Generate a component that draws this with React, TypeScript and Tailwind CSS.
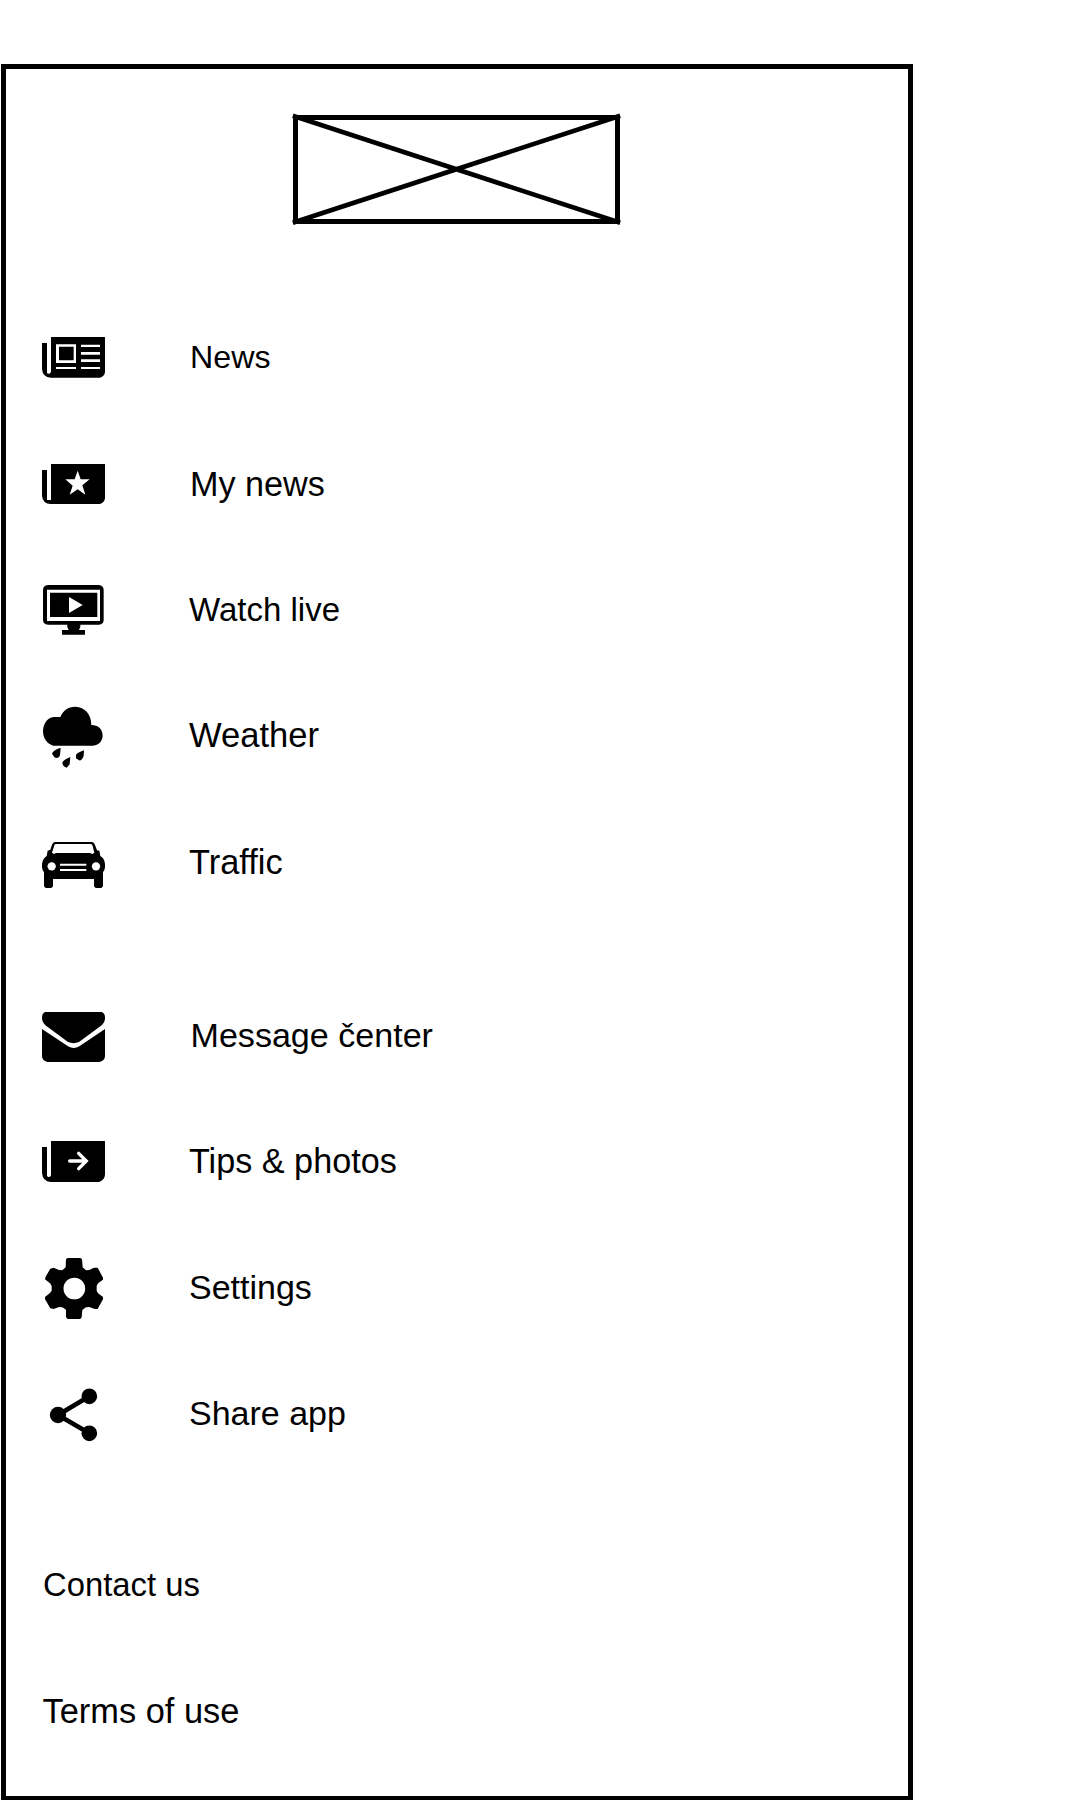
import React from "react";

type IconProps = { viewBox: string; children: React.ReactNode };

function Icon({ viewBox, children }: IconProps) {
  return (
    <svg viewBox={viewBox} className="h-[72px] w-[66px] shrink-0 fill-black" aria-hidden="true">
      {children}
    </svg>
  );
}

const NewsIcon = () => (
  <Icon viewBox="30 3 198 216">
    <path d="M36 69H51V158Q53 162 58 161Q63 160 63 154V51H225V156Q224 169 210 173H62Q38 172 36 148Z" />
    <path
      fill="#fff"
      fillRule="evenodd"
      d="M78 73H138V129H78ZM87 80V121H131V80ZM153 74H210V81H153ZM153 96H210V104H153ZM153 118H210V126H153ZM78 141H138V147H78ZM153 141H210V147H153Z"
    />
  </Icon>
);

const MyNewsIcon = () => (
  <Icon viewBox="30 381 198 216">
    <path d="M36 450H51V540H63V432H225V534Q224 548 210 552H62Q38 551 36 527Z" />
    <path fill="#fff" d="M143 452L152 478H179L157 496L166 524L143 508L119 524L128 497L106 478H134Z" />
  </Icon>
);

const WatchIcon = () => (
  <Icon viewBox="30 9 198 216">
    <path d="M54 45H206Q221 47 221 60V149Q221 163 207 164H151V171L147 180H165V194H96V180H116L112 171V164H54Q39 163 39 149V60Q39 47 54 45Z" />
    <path fill="#fff" fillRule="evenodd" d="M51 59H210V153H51ZM60 68V141H202V68Z" />
    <path fill="#fff" d="M117 81L158 105L117 129Z" />
  </Icon>
);

const WeatherIcon = () => (
  <Icon viewBox="30 387 198 216">
    <path d="M70 527C52 522 39 505 39 483C40 459 54 441 74 441H91C99 421 114 410 136 410C165 411 184 433 184 465C204 465 218 477 218 497C217 514 206 525 189 527Z" />
    <path d="M92 534L90 555C88 564 80 566 73 562L66 551C70 542 82 536 92 534Z" />
    <path d="M162 541L161 557C158 567 153 572 147 571L138 565V554C144 547 155 544 162 541Z" />
    <path d="M121 561L119 583L110 593C103 591 97 586 97 578C102 568 114 565 121 561Z" />
  </Icon>
);

const TrafficIcon = () => (
  <Icon viewBox="30 15 198 216">
    <path d="M75 66H187Q193 67 195 75L201 91L208 92L211 108Q224 116 225 132Q226 150 219 156V199L214 204H197L192 199V177H69V199L64 204H47L42 199V156Q35 150 36 132Q38 116 50 108L53 92L61 89L66 74Q69 67 75 66Z" />
    <path
      fill="#fff"
      d="M79 72H182Q187 72 188 78L193 98L187 102L180 99H78L72 102L66 98L73 76Q74 72 79 72ZM90 131H169V137H90ZM90 147H169V153H90Z"
    />
    <circle cx="65" cy="139" r="12.5" fill="#fff" />
    <circle cx="198" cy="139" r="12.5" fill="#fff" />
  </Icon>
);

const MessageIcon = () => (
  <Icon viewBox="30 27 198 216">
    <path d="M46 66H215Q225 69 225 83Q226 98 213 107L147 156Q131 163 114 156L48 107Q36 97 36 83Q36 69 46 66Z" />
    <path d="M36 117L114 169Q131 179 148 169L225 117V198Q225 212 209 216H52Q36 212 36 198Z" />
  </Icon>
);

const TipsIcon = () => (
  <Icon viewBox="30 405 198 216">
    <path d="M36 471H51V557Q53 562 58 561Q63 560 63 554V453H225V554Q224 571 206 576H62Q38 574 36 549Z" />
    <path d="M119 513H168M146 490L169 513L146 536" fill="none" stroke="#fff" strokeWidth="10" strokeLinecap="round" />
  </Icon>
);

const SettingsIcon = () => (
  <Icon viewBox="30 33 198 216">
    <path
      fillRule="evenodd"
      d="M112 54H152L156 58L158 82L168 91L178 90L192 83H203L219 113V119L204 130L200 138V152L204 160L219 171V178L203 207H194L178 201L168 202L157 210L155 232L151 237H113L108 232V209L97 202L87 201L71 207L61 205L45 178V171L59 160L65 152V138L60 130L45 118L47 110L61 86L71 83L87 90L97 91L107 82L108 58ZM133 113A32 32 0 1 0 133 178A32 32 0 1 0 133 113Z"
    />
  </Icon>
);

const ShareIcon = () => (
  <Icon viewBox="30 411 198 216">
    <path d="M178 469L84 525L178 580" fill="none" stroke="#000" strokeWidth="14" />
    <circle cx="178" cy="469" r="23.5" />
    <circle cx="84" cy="525" r="24.5" />
    <circle cx="178" cy="580" r="23.5" />
  </Icon>
);

type Item = { label: string; icon: () => React.JSX.Element; text: string };

const primary: Item[] = [
  { label: "News", icon: NewsIcon, text: "pl-[84px] text-[32.2px]" },
  { label: "My news", icon: MyNewsIcon, text: "pl-[84px] pt-[2px] text-[34.2px]" },
  { label: "Watch live", icon: WatchIcon, text: "pl-[83px] pt-[2px] text-[33px]" },
  { label: "Weather", icon: WeatherIcon, text: "pl-[83px] text-[34.6px]" },
  { label: "Traffic", icon: TrafficIcon, text: "pl-[83px] pt-[2px] text-[34.4px]" },
];

const secondary: Item[] = [
  { label: "Message čenter", icon: MessageIcon, text: "pl-[84.5px] text-[34.1px]" },
  { label: "Tips & photos", icon: TipsIcon, text: "pl-[83px] text-[34.2px]" },
  { label: "Settings", icon: SettingsIcon, text: "pl-[83px] text-[34px]" },
  { label: "Share app", icon: ShareIcon, text: "pl-[83px] text-[34px]" },
];

function Menu({ items }: { items: Item[] }) {
  return (
    <ul>
      {items.map(({ label, icon: Glyph, text }) => (
        <li key={label} className="flex h-[126px] items-center">
          <Glyph />
          <span className={`${text} leading-[40px] whitespace-nowrap`}>{label}</span>
        </li>
      ))}
    </ul>
  );
}

export default function App() {
  return (
    <div className="h-[1800px] w-[1080px] overflow-hidden bg-white pt-16 pl-px font-['Liberation_Sans',Arial,sans-serif] text-black">
      <main className="flex h-[1736px] w-[912px] flex-col border-[5px] border-b-4 border-black pt-[46px]">
        <svg
          viewBox="0 0 327 109"
          className="ml-[287px] h-[109px] w-[327px] shrink-0 overflow-visible"
          fill="none"
          stroke="#000"
          strokeWidth="5"
          role="img"
          aria-label="Logo"
        >
          <rect x="2.5" y="2.5" width="322" height="104" />
          <path d="M2 1.5L325 107M2 107L325 1.5" strokeWidth="4.6" strokeLinecap="square" />
        </svg>

        <nav className="mt-[70px] ml-[34px] flex flex-col gap-12">
          <Menu items={primary} />
          <Menu items={secondary} />
        </nav>

        <footer className="mt-[46px] ml-9">
          <p className="flex h-[126px] items-center pl-px text-[32.8px] leading-[40px]">Contact us</p>
          <p className="flex h-[126px] items-center pl-[0.5px] text-[34.4px] leading-[40px]">Terms of use</p>
        </footer>
      </main>
    </div>
  );
}
